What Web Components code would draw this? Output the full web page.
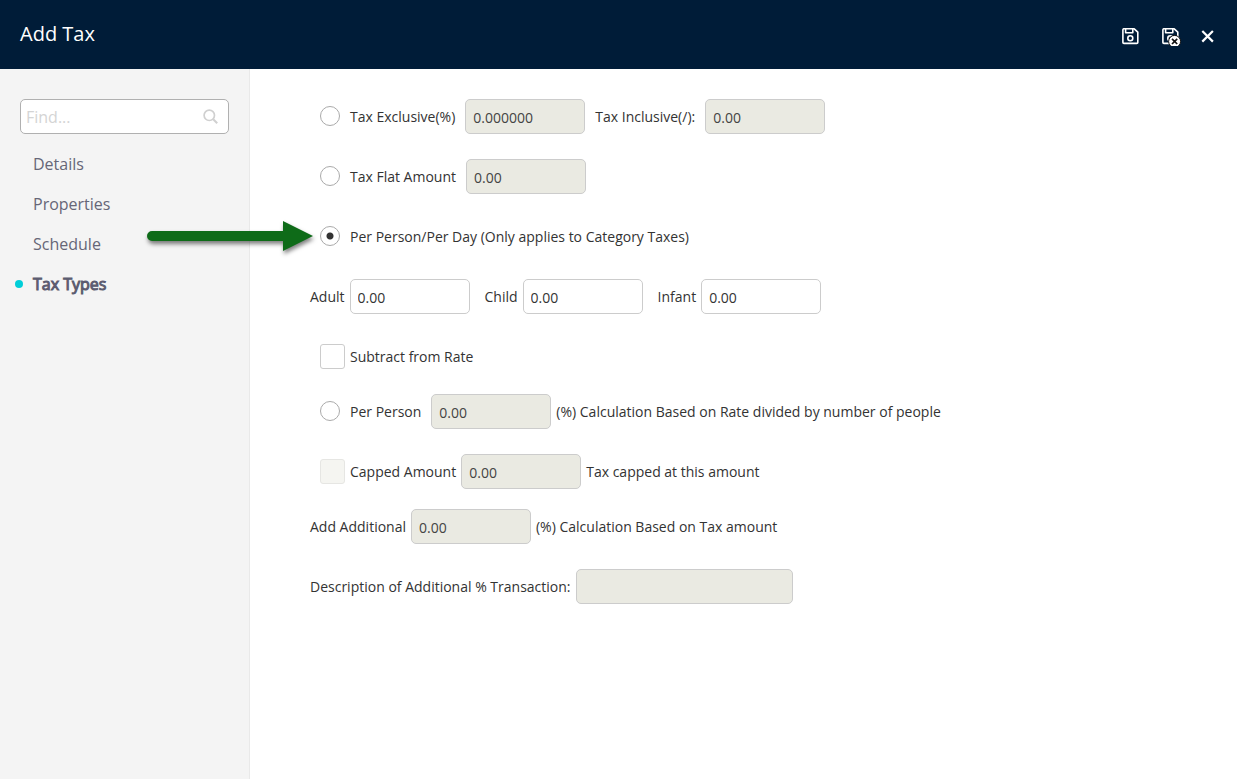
<!DOCTYPE html>
<html lang="en">
<head>
<meta charset="UTF-8">
<meta name="viewport" content="width=device-width, initial-scale=1.0">
<title>Add Tax</title>
<style>
  body {
    margin: 0;
    font-family: "Open Sans", "Noto Sans", sans-serif;
    font-size: 14px;
    line-height: 20px;
    color: #333;
    background: #fff;
  }
</style>
</head>
<body>
<tax-dialog>
  <dialog-header slot="header">Add Tax</dialog-header>
  <side-nav slot="sidebar">
    <nav-item href="#details">Details</nav-item>
    <nav-item href="#properties">Properties</nav-item>
    <nav-item href="#schedule">Schedule</nav-item>
    <nav-item href="#tax-types" active>Tax Types</nav-item>
  </side-nav>
  <tax-types-form></tax-types-form>
</tax-dialog>

<script>
class TaxDialog extends HTMLElement {
  constructor() {
    super();
    this.attachShadow({ mode: 'open' });
    this.shadowRoot.innerHTML = /*html*/ `
      <style>
        :host {
          display: flex;
          flex-direction: column;
          min-height: 100vh;
        }

        .body {
          flex: 1;
          display: grid;
          grid-template-columns: 250px 1fr;
        }

        main {
          padding: 30px 60px;
        }
      </style>
      <slot name="header"></slot>
      <div class="body">
        <slot name="sidebar"></slot>
        <main><slot></slot></main>
      </div>
    `;
  }
}

class DialogHeader extends HTMLElement {
  constructor() {
    super();
    this.attachShadow({ mode: 'open' });
    this.shadowRoot.innerHTML = /*html*/ `
      <style>
        :host {
          display: block;
          background: #001c38;
          color: #fff;
        }

        header {
          display: flex;
          justify-content: space-between;
          align-items: flex-start;
          padding: 20px 20px 22px;
        }

        h1 {
          margin: 0;
          font-size: 20px;
          font-weight: 400;
          line-height: 27px;
        }

        .actions {
          display: flex;
          gap: 18px;
          padding-top: 6px;
        }

        button {
          display: flex;
          padding: 0;
          border: 0;
          background: none;
          color: inherit;
          cursor: pointer;
        }

        svg {
          display: block;
        }
      </style>
      <header>
        <h1><slot></slot></h1>
        <div class="actions">
          <button type="button" aria-label="Save">
            <svg width="22" height="20" viewBox="0 0 22 20" fill="none" stroke="currentColor" stroke-width="1.6" stroke-linejoin="round">
              <path d="M3.6 2.8h10.6l3.6 3.4v10.2q0 1-1 1H3.9q-1 0-1-1V3.8q0-1 1-1z"/>
              <path d="M5.6 3v3.8h7.2V3"/>
              <circle cx="10.3" cy="12.2" r="2.5"/>
            </svg>
          </button>
          <button type="button" aria-label="Save and close">
            <svg width="22" height="20" viewBox="0 0 22 20" fill="none" stroke="currentColor" stroke-width="1.6" stroke-linejoin="round">
              <path d="M3.6 2.8h10.6l3.6 3.4v10.2q0 1-1 1H3.9q-1 0-1-1V3.8q0-1 1-1z"/>
              <path d="M5.6 3v3.8h7.2V3"/>
              <circle cx="10.3" cy="12.2" r="2.5"/>
              <circle cx="14.6" cy="15.4" r="6" fill="#fff" stroke="#111" stroke-width="1"/>
              <path d="M12 12.8l5.2 5.2m0-5.2l-5.2 5.2" stroke="#111" stroke-width="1.7"/>
            </svg>
          </button>
          <button type="button" aria-label="Close">
            <svg width="17" height="20" viewBox="0 0 17 20" fill="none" stroke="currentColor" stroke-width="2.2">
              <path d="M2.3 5l10.6 10.6M12.9 5L2.3 15.6"/>
            </svg>
          </button>
        </div>
      </header>
    `;
  }
}

class SideNav extends HTMLElement {
  constructor() {
    super();
    this.attachShadow({ mode: 'open' });
    this.shadowRoot.innerHTML = /*html*/ `
      <style>
        :host {
          display: block;
          padding: 30px 20px;
          background: #f4f4f4;
          border-right: 1px solid #e9e9e9;
        }

        .search {
          display: flex;
          align-items: center;
          box-sizing: border-box;
          height: 35px;
          padding: 0 10px 0 5px;
          border: 1px solid #b0b0b0;
          border-radius: 5px;
          background: #fff;
          color: #d0d0d0;
        }

        input {
          flex: 1;
          min-width: 0;
          padding: 0;
          border: 0;
          outline: 0;
          background: none;
          font: inherit;
          font-size: 16px;
          color: #333;
        }

        input::placeholder {
          color: #d4d4d4;
        }

        nav {
          display: flex;
          flex-direction: column;
          padding-top: 10px;
        }
      </style>
      <label class="search">
        <input type="text" placeholder="Find..." aria-label="Find">
        <svg width="15" height="15" viewBox="0 0 15 15" fill="none" stroke="currentColor" stroke-width="1.7">
          <circle cx="6.3" cy="6.3" r="5.2"/>
          <path d="M10.2 10.2l4 4" stroke-width="2"/>
        </svg>
      </label>
      <nav><slot></slot></nav>
    `;
  }
}

class NavItem extends HTMLElement {
  constructor() {
    super();
    this.attachShadow({ mode: 'open' });
    this.shadowRoot.innerHTML = /*html*/ `
      <style>
        :host {
          display: block;
          position: relative;
          padding-left: 13px;
        }

        a {
          display: block;
          font-size: 16px;
          line-height: 40px;
          color: #666677;
          text-decoration: none;
        }

        /* Thickened without changing the text's width */
        :host([active]) a {
          color: #5c5c70;
          -webkit-text-stroke: 1px #5c5c70;
        }

        /* Marker that hangs in the sidebar's padding */
        :host([active])::before {
          content: "";
          position: absolute;
          left: -5px;
          top: 16px;
          width: 8px;
          height: 8px;
          border-radius: 50%;
          background: #00ced8;
        }
      </style>
      <a href="${this.getAttribute('href')}"><slot></slot></a>
    `;
  }
}

class FormRow extends HTMLElement {
  constructor() {
    super();
    this.attachShadow({ mode: 'open' });
    this.shadowRoot.innerHTML = /*html*/ `
      <style>
        :host {
          display: flex;
          align-items: center;
          gap: 5px;
          min-height: 35px;
          position: relative;
        }

        :host([indent]) {
          margin-left: 10px;
        }

        :host([wide]) {
          gap: 10px;
        }

        :host([spread]) {
          gap: 15px;
        }
      </style>
      <slot></slot>
    `;
  }
}

// Text box with an optional label before it and a note after it
class AmountField extends HTMLElement {
  constructor() {
    super();
    this.attachShadow({ mode: 'open' });
    this.shadowRoot.innerHTML = /*html*/ `
      <style>
        :host {
          display: flex;
          align-items: center;
          gap: 5px;
        }

        :host([wide]) {
          gap: 10px;
        }

        input {
          box-sizing: border-box;
          width: 120px;
          height: 35px;
          padding: 2px 7px 0;
          border: 1px solid #ccc;
          border-radius: 5px;
          background: #fff;
          font: inherit;
          color: #333;
        }

        input:disabled {
          background: #eaeae2;
          color: #444;
        }

        :host([long]) input {
          width: 217px;
        }
      </style>
      <label for="field"></label>
      <input type="text" id="field">
      <slot></slot>
    `;
  }

  connectedCallback() {
    const label = this.shadowRoot.querySelector('label');
    const input = this.shadowRoot.querySelector('input');
    input.value = this.getAttribute('value') || '';
    input.disabled = this.hasAttribute('disabled');
    if (this.hasAttribute('label')) {
      label.textContent = this.getAttribute('label');
    } else {
      label.remove();
      input.setAttribute('aria-label', this.getAttribute('name'));
    }
  }
}

class PointerArrow extends HTMLElement {
  constructor() {
    super();
    this.attachShadow({ mode: 'open' });
    this.shadowRoot.innerHTML = /*html*/ `
      <style>
        :host {
          display: block;
          position: absolute;
          right: 100%;
          top: 2px;
          margin-right: 7px;
          pointer-events: none;
        }

        svg {
          display: block;
          overflow: visible;
          filter: drop-shadow(1px 3px 2px rgba(0, 0, 0, 0.5));
        }
      </style>
      <svg width="166" height="30" viewBox="0 0 166 30" fill="#0e6b18" aria-hidden="true">
        <path d="M5 10h131V0l30 15-30 15V20H5a5 5 0 0 1 0-10z"/>
      </svg>
    `;
  }
}

class TaxTypesForm extends HTMLElement {
  constructor() {
    super();
    this.attachShadow({ mode: 'open' });
    // radios live in one tree so that they share a group
    this.shadowRoot.innerHTML = /*html*/ `
      <style>
        :host {
          display: block;
        }

        form {
          display: flex;
          flex-direction: column;
          gap: 20px;
        }

        .group {
          display: flex;
          flex-direction: column;
          gap: 25px;
        }

        input {
          appearance: none;
          flex: none;
          box-sizing: border-box;
          margin: 0;
          border: 1px solid #ccc;
          background: #fff;
        }

        input[type="radio"] {
          width: 20px;
          height: 20px;
          margin-bottom: 1px;
          border-color: #aaa;
          border-radius: 50%;
        }

        input[type="radio"]:checked {
          background: radial-gradient(circle, #333 3px, #fff 4px);
        }

        input[type="checkbox"] {
          width: 25px;
          height: 25px;
          border-radius: 3px;
        }

        input[type="checkbox"]:checked {
          background: #333;
          box-shadow: inset 0 0 0 5px #fff;
        }

        input[type="checkbox"]:disabled {
          border-color: #e6e6e3;
          background: #f5f5f1;
        }
      </style>
      <form>
        <div class="group">
          <form-row indent wide>
            <input type="radio" name="type" id="exclusive">
            <label for="exclusive">Tax Exclusive(%)</label>
            <amount-field name="Tax exclusive percent" value="0.000000" disabled></amount-field>
            <amount-field wide label="Tax Inclusive(/):" value="0.00" disabled></amount-field>
          </form-row>
          <form-row indent wide>
            <input type="radio" name="type" id="flat">
            <label for="flat">Tax Flat Amount</label>
            <amount-field name="Flat amount" value="0.00" disabled></amount-field>
          </form-row>
          <form-row indent wide>
            <pointer-arrow></pointer-arrow>
            <input type="radio" name="type" id="per-day" checked>
            <label for="per-day">Per Person/Per Day (Only applies to Category Taxes)</label>
          </form-row>
          <form-row spread>
            <amount-field label="Adult" value="0.00"></amount-field>
            <amount-field label="Child" value="0.00"></amount-field>
            <amount-field label="Infant" value="0.00"></amount-field>
          </form-row>
          <form-row indent>
            <input type="checkbox" id="subtract">
            <label for="subtract">Subtract from Rate</label>
          </form-row>
        </div>
        <div class="group">
          <form-row indent wide>
            <input type="radio" name="type" id="per-person">
            <label for="per-person">Per Person</label>
            <amount-field name="Per person percent" value="0.00" disabled>(%) Calculation Based on Rate divided by number of people</amount-field>
          </form-row>
          <form-row indent>
            <input type="checkbox" id="capped" disabled>
            <label for="capped">Capped Amount</label>
            <amount-field name="Capped amount" value="0.00" disabled>Tax capped at this amount</amount-field>
          </form-row>
        </div>
        <div class="group">
          <form-row>
            <amount-field label="Add Additional" value="0.00" disabled>(%) Calculation Based on Tax amount</amount-field>
          </form-row>
          <form-row>
            <amount-field long label="Description of Additional % Transaction:" disabled></amount-field>
          </form-row>
        </div>
      </form>
    `;
  }
}

customElements.define('tax-dialog', TaxDialog);
customElements.define('dialog-header', DialogHeader);
customElements.define('side-nav', SideNav);
customElements.define('nav-item', NavItem);
customElements.define('form-row', FormRow);
customElements.define('amount-field', AmountField);
customElements.define('pointer-arrow', PointerArrow);
customElements.define('tax-types-form', TaxTypesForm);
</script>
</body>
</html>
